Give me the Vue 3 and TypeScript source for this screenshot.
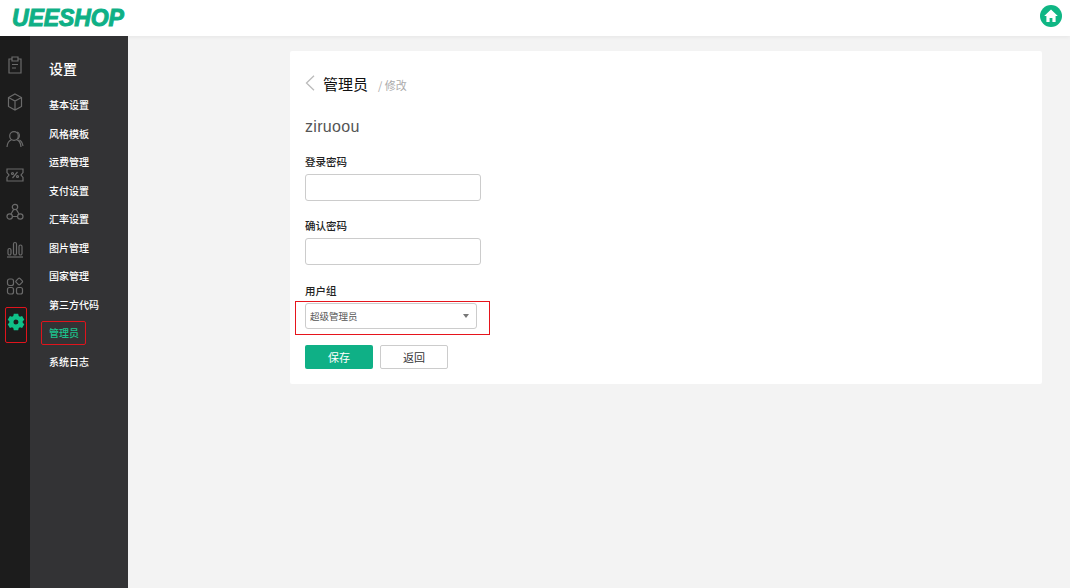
<script setup lang="ts">
const menu = ['基本设置', '风格模板', '运费管理', '支付设置', '汇率设置', '图片管理', '国家管理', '第三方代码', '管理员', '系统日志']
</script>

<template>
  <div class="page">
    <header class="top">
      <span class="logo">UEESHOP</span>
      <svg class="home" viewBox="0 0 22 22" width="22" height="22">
        <circle cx="11" cy="11" r="11" fill="#0fb684" />
        <path d="M11 4.600 4.200 10.900h2.200v6h3.200v-3.800h2.800v3.800h3.200v-6h2.200z" fill="#fff" />
      </svg>
    </header>
    <div class="body">
      <nav class="rail">
        <svg class="ri" viewBox="0 0 18 18"><path d="M6 3H3v14h12V3h-3M6 1h6v4H6zM6 8.500h6M6 12h4" /></svg>
        <svg class="ri" viewBox="0 0 18 18"><path d="M9 1l6.500 3.500v9L9 17l-6.500-3.500v-9zM2.500 4.500 9 8l6.500-3.500M9 8v9" /></svg>
        <svg class="ri" viewBox="0 0 18 18"><circle cx="8" cy="6" r="4.300" /><path d="M1 17c.3-4 2.300-6.500 4.500-7.300M10.500 9.700c2.800.8 4.200 3.500 4.500 7.300M11 2c2.500.5 3.500 4.500 1 7M13.500 10c2 1 3 3.500 3.500 6" /></svg>
        <svg class="ri" viewBox="0 0 18 18"><path d="M1 3h16v3.500l-2 2.500 2 2.500V15H1v-3.500L3 9 1 6.500zM6.500 12l5-6" /><circle cx="6.500" cy="7.500" r="1" /><circle cx="11.500" cy="10.500" r="1" /></svg>
        <svg class="ri" viewBox="0 0 18 18"><circle cx="9" cy="4" r="2.700" /><circle cx="3.700" cy="13.500" r="2.700" /><circle cx="14.300" cy="13.500" r="2.700" /><path d="M7.700 6.400 5 11M10.300 6.400 13 11M6.400 13.500h5.200" /></svg>
        <svg class="ri" viewBox="0 0 18 18"><rect x="2" y="8.500" width="3" height="6.500" rx="1.500" /><rect x="7.500" y="2.500" width="3" height="12.500" rx="1.500" /><rect x="13" y="5" width="3" height="10" rx="1.500" /><path d="M1 17h16" /></svg>
        <svg class="ri" viewBox="0 0 18 18"><rect x="1.500" y="2" width="6" height="6.500" rx="2" /><rect x="10.500" y="1.800" width="5.400" height="5.400" rx="1.300" transform="rotate(45 13.200 4.500)" /><rect x="1.500" y="10.500" width="6" height="6.500" rx="2" /><rect x="10.500" y="10.500" width="6" height="6.500" rx="2" /></svg>
        <span class="gear-box">
          <svg viewBox="0 0 18 18" width="18" height="18"><path fill="#0fc088" fill-rule="evenodd" d="M6.800.8h4.400l.5 2.100 1.300.8 2.100-.7 2.200 3.800-1.600 1.500v1.400l1.600 1.500-2.200 3.800-2.100-.7-1.300.8-.5 2.100H6.800l-.5-2.100-1.300-.8-2.100.7L.7 11.200l1.600-1.500V8.300L.7 6.800l2.200-3.800 2.100.7 1.300-.8zM9 6.500a2.500 2.500 0 1 0 0 5 2.500 2.500 0 0 0 0-5z" /></svg>
        </span>
      </nav>
      <aside class="side">
        <h2 class="side-title">设置</h2>
        <ul class="menu">
          <li v-for="m in menu" :key="m" :class="{ on: m === '管理员' }"><span>{{ m }}</span></li>
        </ul>
      </aside>
      <main class="main">
        <section class="card">
          <div class="crumb">
            <svg class="back" viewBox="0 0 10 16" width="10" height="16"><path d="M9 .8 1.500 8 9 15.200" /></svg>
            <span class="crumb-title">管理员</span>
            <span class="crumb-sub">/ 修改</span>
          </div>
          <div class="name">ziruoou</div>
          <label class="lab">登录密码</label>
          <div class="input"></div>
          <label class="lab l2">确认密码</label>
          <div class="input"></div>
          <label class="lab l3">用户组</label>
          <div class="sel-wrap">
            <div class="select"><span>超级管理员</span><i class="caret"></i></div>
          </div>
          <div class="btns">
            <button class="btn save">保存</button>
            <button class="btn ret">返回</button>
          </div>
        </section>
      </main>
    </div>
  </div>
</template>

<style>
html, body { margin: 0; }
</style>

<style scoped>
.page { width: 1070px; height: 588px; overflow: hidden; display: flex; flex-direction: column; background: #f3f3f3; font-family: "Noto Sans CJK SC", "Liberation Sans", sans-serif; }
.top { height: 36px; flex: none; background: #fff; display: flex; align-items: center; justify-content: space-between; padding: 0 8px 0 12px; box-shadow: 0 1px 4px rgba(0,0,0,.06); position: relative; z-index: 1; }
.logo { font: italic 700 23px/36px "Liberation Sans", sans-serif; color: #0fb086; -webkit-text-stroke: 1px #0fb086; letter-spacing: -.1px; margin-top: -1px; }
.home { display: block; margin-top: -5px; }
.body { flex: 1; display: flex; min-height: 0; }
.rail { width: 30px; flex: none; background: #1c1c1c; display: flex; flex-direction: column; align-items: center; padding-top: 20px; gap: 18.800px; box-sizing: border-box; }
.ri { width: 18px; height: 18px; display: block; fill: none; stroke: #6b6b6b; stroke-width: 1.200; }
.gear-box { width: 22px; height: 36px; margin: -7px 0 0 1px; border: 1px solid #e0141c; border-radius: 2px; box-sizing: border-box; display: flex; align-items: flex-start; justify-content: center; padding-top: 5px; }
.side { width: 98px; flex: none; background: #333335; color: #fff; box-sizing: border-box; padding: 0 0 0 19px; }
.side-title { margin: 22px 0 0; font-size: 14px; line-height: 20px; font-weight: 500; }
.menu { list-style: none; margin: 13px 0 0; padding: 0; }
.menu li { height: 28.500px; line-height: 28.500px; font-size: 10px; font-weight: 500; white-space: nowrap; }
.menu li span { display: inline-block; line-height: 20px; }
.menu li.on { color: #1bc38d; }
.menu li.on span { border: 1px solid #e0141c; border-radius: 2px; padding: 0 6px 0 7px; margin-left: -8px; line-height: 22px; }
.main { flex: 1; min-width: 0; padding: 15px 28px 0 162px; }
.card { background: #fff; height: 333px; box-sizing: border-box; padding: 0 15px; border-radius: 2px; }
.crumb { display: flex; align-items: center; height: 24px; padding-top: 20px; padding-bottom: 1px; }
.back { fill: none; stroke: #bbb; stroke-width: 1.300; margin-right: 8px; }
.crumb-title { font-size: 15px; color: #111; }
.crumb-sub { font-size: 11px; color: #aaa; margin-left: 10px; margin-top: 3px; }
.name { font: 16px/20px "Liberation Sans", sans-serif; color: #555; margin-top: 21px; letter-spacing: .3px; }
.lab { display: block; font-size: 10.500px; font-weight: 500; line-height: 16px; color: #222; margin-top: 17px; }
.l2 { margin-top: 17px; }
.l3 { margin-top: 18px; }
.input { width: 176px; height: 27px; margin-top: 4px; border: 1px solid #ccc; border-radius: 3px; box-sizing: border-box; }
.sel-wrap { width: 195px; height: 34px; margin: 2px 0 0 -10px; border: 1px solid #e6141c; box-sizing: border-box; padding: 1px 0 0 9px; }
.select { width: 172px; height: 26px; border: 1px solid #ccc; border-radius: 3px; box-sizing: border-box; display: flex; align-items: center; justify-content: space-between; padding: 0 7px 0 4px; font-size: 9.500px; color: #555; }
.caret { width: 0; height: 0; border: 3.500px solid transparent; border-top: 4px solid #777; border-bottom: 0; }
.btns { display: flex; gap: 7px; margin-top: 10px; }
.btn { width: 68px; height: 24px; border-radius: 2px; font: 11px "Noto Sans CJK SC", sans-serif; padding: 0; box-sizing: border-box; }
.save { background: #0fb086; border: 0; color: #fff; }
.ret { background: #fff; border: 1px solid #ccc; color: #333; }
</style>
